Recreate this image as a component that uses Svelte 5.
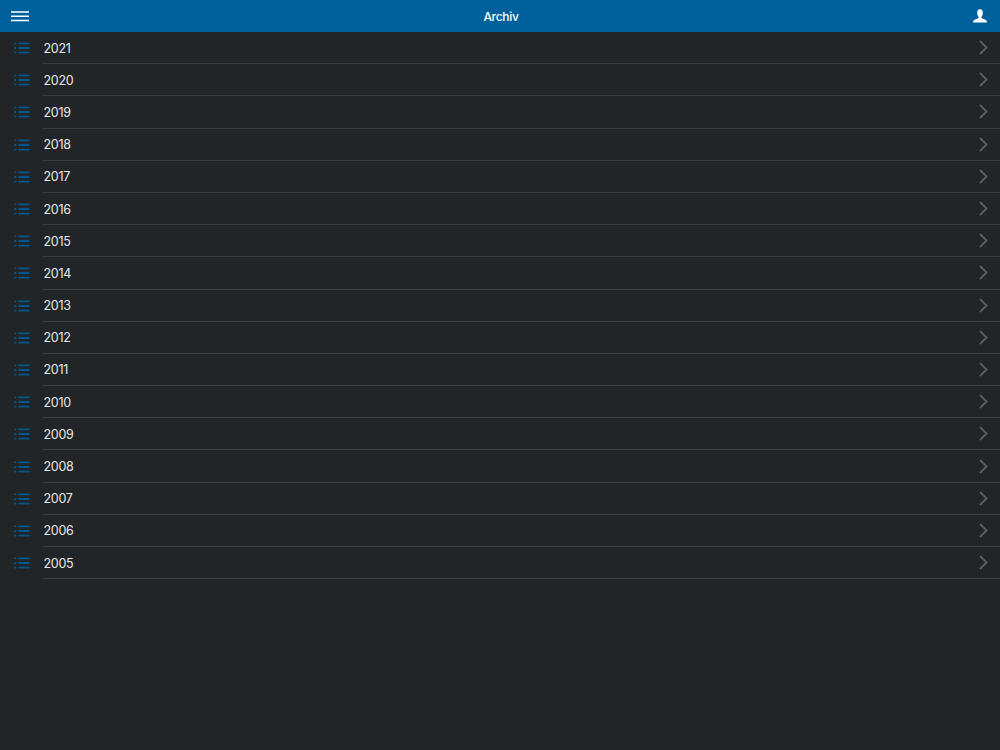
<script>
	const years = [2021, 2020, 2019, 2018, 2017, 2016, 2015, 2014, 2013, 2012, 2011, 2010, 2009, 2008, 2007, 2006, 2005];
</script>

<div class="page">
	<header class="bar">
		<button class="icon-btn" aria-label="Menü">
			<svg width="18" height="11" viewBox="0 0 18 11">
				<path d="M0 1h18M0 5.300h18M0 9.600h18" stroke="#fff" stroke-width="1.500" fill="none" />
			</svg>
		</button>
		<h1>Archiv</h1>
		<button class="icon-btn" aria-label="Konto">
			<svg width="14" height="14" viewBox="0 0 14 14">
				<path
					fill="#fff"
					d="M7 0.200C4.900 0.200 4.200 1.800 4.200 3.700c0 1.600 0.500 3.100 1.300 4 0.200 0.500 0.100 1.200-0.300 1.500C4 10 1 10.500 0.400 11.600 0.200 12.100 0.100 12.900 0.100 13.500h13.800c0-0.600-0.100-1.400-0.300-1.900C13 10.500 10 10 8.800 9.200c-0.400-0.300-0.500-1-0.300-1.500 0.800-0.900 1.300-2.400 1.300-4C9.800 1.800 9.100 0.200 7 0.200z"
				/>
			</svg>
		</button>
	</header>

	<ul class="list">
		{#each years as year}
			<li class="row">
				<span class="lead">
					<svg width="16" height="12" viewBox="0 0 16 12">
						<path d="M0.300 1.300h2M0.300 6h2M0.300 10.700h2M4.500 1.300h11M4.500 6h11M4.500 10.700h11" stroke="#00588c" stroke-width="1.800" fill="none" />
					</svg>
				</span>
				<span class="cell">
					<span class="year">{year}</span>
					<svg width="9" height="15" viewBox="0 0 9 15">
						<path d="M1 1l6.500 6.500L1 14" stroke="#5a5d5f" stroke-width="2" fill="none" />
					</svg>
				</span>
			</li>
		{/each}
	</ul>
</div>

<style>
	:global(body) {
		background: #212528;
	}

	.page {
		height: 750px;
		overflow: hidden;
		background: #212528;
		font-family: Inter, 'Liberation Sans', sans-serif;
	}

	.bar {
		display: flex;
		align-items: center;
		justify-content: space-between;
		height: 32px;
		padding: 0 13px 0 11px;
		background: #00609c;
		color: #fff;
	}

	h1 {
		margin: 0;
		padding-top: 1px;
		font-size: 12px;
		font-weight: 500;
		letter-spacing: -0.300px;
	}

	.icon-btn {
		display: flex;
		padding: 0;
		border: none;
		background: none;
	}

	.list {
		margin: 0;
		padding: 0;
		list-style: none;
	}

	.row {
		display: flex;
		height: 32.190px;
	}

	.lead {
		display: flex;
		align-items: center;
		justify-content: center;
		width: 43px;
		flex: none;
	}

	.cell {
		flex: 1;
		display: flex;
		align-items: center;
		justify-content: space-between;
		padding-left: 0.500px;
		padding-right: 12px;
		border-bottom: 1px solid #383c3f;
		box-sizing: border-box;
	}

	.year {
		padding-top: 1px;
		color: #e6e7e8;
		font-size: 12.500px;
		letter-spacing: -0.300px;
	}
</style>
